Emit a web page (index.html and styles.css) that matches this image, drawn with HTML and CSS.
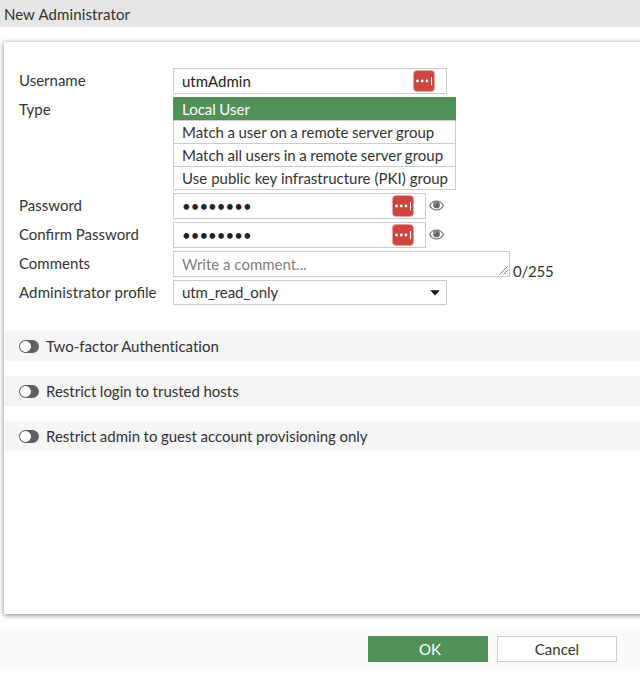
FILE: index.html
```html
<!DOCTYPE html>
<html lang="en">
  <head>
    <meta charset="utf-8">
    <title>New Administrator</title>
    <link rel="stylesheet" href="styles.css">
  </head>
  <body>

    <!-- shared icons -->
    <svg class="sprite" width="0" height="0">
      <symbol id="icon-key" viewBox="0 0 22 22">
        <rect x=".5" y=".5" width="21" height="21" rx="3.5" fill="#cf453f" stroke="#e5a5a2" stroke-width=".7"/>
        <circle cx="4.5" cy="11" r="1.4" fill="#fff"/>
        <circle cx="9.2" cy="11" r="1.4" fill="#fff"/>
        <circle cx="13.9" cy="11" r="1.4" fill="#fff"/>
        <path d="M18.5 7v8.3" stroke="#fff" stroke-width="1.1"/>
      </symbol>
      <symbol id="icon-eye" viewBox="0 0 15 11">
        <path d="M.6 5.5C2.2 2.6 4.6 1 7.5 1s5.3 1.6 6.9 4.5C12.8 8.4 10.4 10 7.5 10S2.2 8.4.6 5.5z" fill="#fff" stroke="#666" stroke-width="1.1"/>
        <circle cx="7.5" cy="4.9" r="3.4" fill="#666"/>
        <path d="M5.6 4.8c0-1.1.8-1.9 1.9-1.9" fill="none" stroke="#ddd" stroke-width=".8"/>
      </symbol>
    </svg>

    <h1 class="title">New <span class="wide">Administrator</span></h1>

    <div class="panel">
      <form class="form">
        <div class="row">
          <label class="row__label">Username</label>
          <div class="field field--name">
            <input class="field__input" type="text" value="utmAdmin">
            <svg class="field__key"><use href="#icon-key"/></svg>
          </div>
        </div>
        <div class="row">
          <label class="row__label">Type</label>
          <ul class="types">
            <li class="types__item is-selected">Local User</li>
            <li class="types__item">Match a user on a remote server group</li>
            <li class="types__item">Match all users in a remote server group</li>
            <li class="types__item types__item--last">Use public key infrastructure (PKI) group</li>
          </ul>
        </div>
        <div class="row">
          <label class="row__label">Password</label>
          <div class="field field--password">
            <input class="field__input" type="password" value="password">
            <svg class="field__key"><use href="#icon-key"/></svg>
          </div>
          <svg class="eye"><use href="#icon-eye"/></svg>
        </div>
        <div class="row">
          <label class="row__label">Confirm Password</label>
          <div class="field field--password">
            <input class="field__input" type="password" value="password">
            <svg class="field__key"><use href="#icon-key"/></svg>
          </div>
          <svg class="eye"><use href="#icon-eye"/></svg>
        </div>
        <div class="row">
          <label class="row__label">Comments</label>
          <div class="field field--comment">
            <input class="field__input" type="text" placeholder="Write a comment...">
            <svg class="grip" viewBox="0 0 9 9"><path d="M.5 8.5l8-8M4.5 8.5l4-4" stroke="#555" stroke-width=".8"/></svg>
          </div>
          <span class="counter">0/255</span>
        </div>
        <div class="row">
          <label class="row__label"><span class="wide">Administrator</span> profile</label>
          <div class="field field--select">
            <span class="field__value">utm_read_only</span>
            <svg class="caret" viewBox="0 0 10 6"><path d="M.2.3h9.6L5 5.6z" fill="#111"/></svg>
          </div>
        </div>
      </form>

      <div class="section"><span class="toggle"></span><span class="section__text">Two-factor Authentication</span></div>
      <div class="section"><span class="toggle"></span><span class="section__text">Restrict login to trusted hosts</span></div>
      <div class="section"><span class="toggle"></span><span class="section__text">Restrict admin to guest account provisioning only</span></div>
    </div>

    <div class="footer">
      <button class="button button--primary">OK</button>
      <button class="button">Cancel</button>
    </div>

  </body>
</html>
```
FILE: styles.css
```css
* { box-sizing: border-box; }

body {
  margin: 0;
  background: #fff;
  color: #333;
  font: 15px/22px Lato, sans-serif;
  overflow: hidden;
}

.sprite { display: block; }

.wide { letter-spacing: .12px; }

.title {
  margin: 0;
  height: 27px;
  padding: 0 4px;
  background: #e6e6e6;
  font-size: 15px;
  font-weight: normal;
  line-height: 29px;
}

.panel {
  height: 572px;
  margin: 15px -10px 0 4px;
  padding-top: 26px;
  background: #fff;
  box-shadow: 0 1px 5px rgba(0, 0, 0, .5);
}

.form {
  display: flex;
  flex-direction: column;
  gap: 3px;
  margin-bottom: 26px;
  padding-left: 15px;
}

.row {
  display: flex;
  align-items: flex-start;
  height: 26px;
}

.row:nth-child(2) { height: 93px; }
.row:last-child { height: 25px; }

.row__label {
  width: 154px;
  line-height: 24px;
}

.field {
  display: flex;
  align-items: center;
  height: 26px;
  border: 1px solid #ccc;
  background: #fff;
}

.field--name { width: 274px; padding-right: 11px; }
.field--password { width: 253px; padding-right: 11px; }
.field--comment { width: 337px; }
.field--select { width: 274px; height: 25px; padding-right: 6px; }

.field__input {
  flex: 1;
  min-width: 0;
  height: 24px;
  padding: 0 0 1px 8px;
  border: 0;
  outline: 0;
  background: none;
  color: #222;
  font: inherit;
}

.field__input::placeholder { color: #808080; }

.field__key { width: 22px; height: 22px; }

.field__value {
  flex: 1;
  padding: 0 0 1px 8px;
  letter-spacing: -.06px;
}

.caret { width: 10px; height: 6px; }

.grip {
  align-self: flex-end;
  width: 9px;
  height: 9px;
  margin: 0 1px 1px 0;
}

.eye {
  width: 15px;
  height: 11px;
  margin: 7px 0 0 3px;
}

.counter {
  padding: 9px 0 0 3px;
  letter-spacing: -.2px;
}

.types {
  width: 283px;
  margin: 0;
  padding: 0;
  list-style: none;
}

.types__item {
  height: 23px;
  padding-left: 8px;
  border: 1px solid #ccc;
  border-top: 0;
  line-height: 23px;
  white-space: nowrap;
  word-spacing: -.3px;
}

.types__item--last { word-spacing: .2px; }

.types__item.is-selected {
  height: 24px;
  border-color: #519059;
  border-bottom-color: #ccc;
  background: #519059;
  color: #fff;
  line-height: 25px;
}

.section {
  display: flex;
  align-items: center;
  height: 30px;
  margin-bottom: 15px;
  padding-left: 15px;
  background: #f5f5f5;
  font-variant-ligatures: none;
}

.section__text { word-spacing: -.3px; }

.toggle {
  width: 20px;
  height: 13px;
  margin-right: 7px;
  border-radius: 7px;
  background: radial-gradient(circle at 6.5px 6.5px, #fff 5px, #606060 5.8px);
}

.footer {
  display: flex;
  justify-content: flex-end;
  gap: 9px;
  height: 40px;
  margin-top: 15px;
  padding: 7px 23px 0 0;
  background: #fafafa;
}

.button {
  width: 120px;
  height: 26px;
  padding: 0;
  border: 1px solid #ccc;
  background: #fff;
  color: #333;
  font: inherit;
}

.button--primary {
  padding-left: 4px;
  border-color: #519059;
  background: #519059;
  color: #fff;
}
```
